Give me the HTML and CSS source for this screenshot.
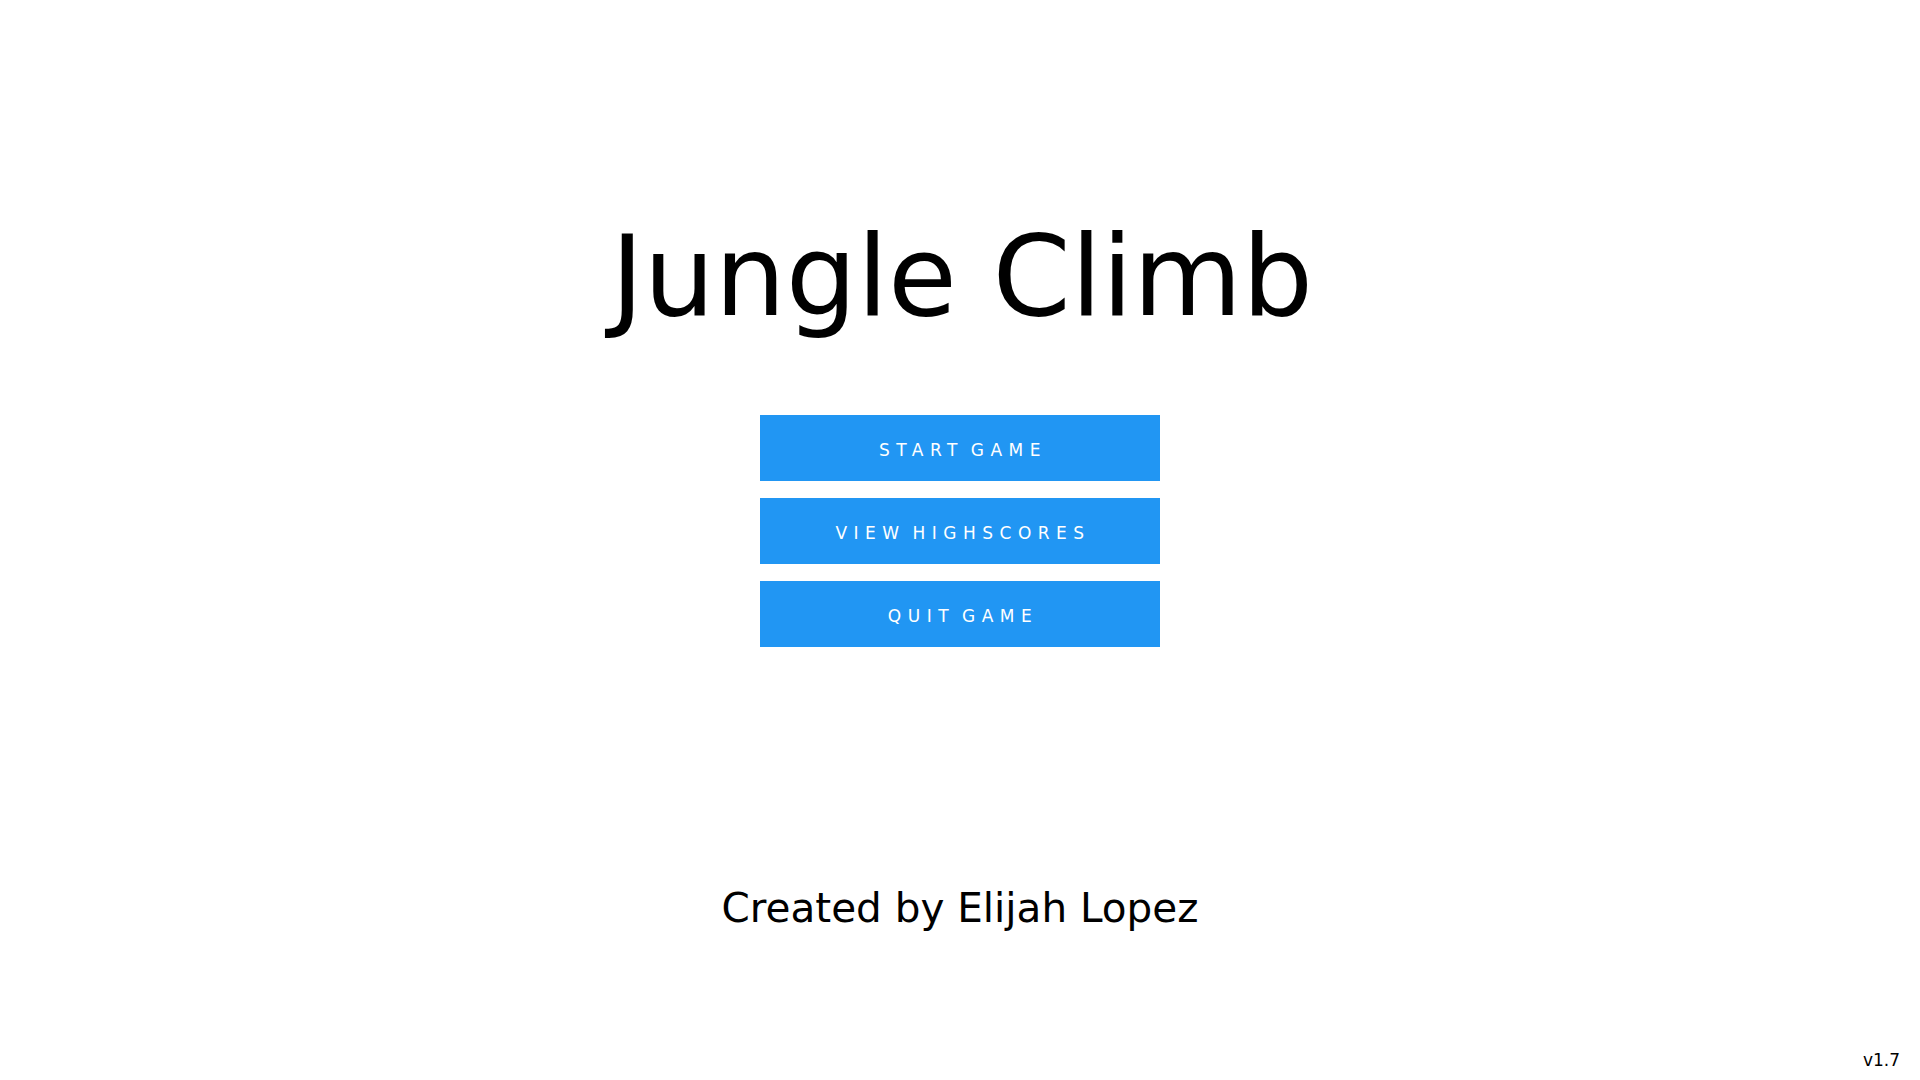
FILE: index.html
```html
<!DOCTYPE html>
<html lang="en">
<head>
<meta charset="utf-8">
<title>Jungle Climb</title>
<link rel="stylesheet" href="styles.css">
</head>
<body>
<main class="menu">
  <h1 class="title">Jungle Climb</h1>
  <div class="buttons">
    <button class="btn">START GAME</button>
    <button class="btn">VIEW HIGHSCORES</button>
    <button class="btn">QUIT GAME</button>
  </div>
  <p class="credit">Created by Elijah Lopez</p>
</main>
<div class="version">v1.7</div>
</body>
</html>
```
FILE: styles.css
```css
html, body {
  margin: 0;
  padding: 0;
  background: #ffffff;
  width: 1920px;
  height: 1080px;
  overflow: hidden;
  font-family: "DejaVu Sans", Verdana, sans-serif;
  color: #000;
}

.menu {
  display: flex;
  flex-direction: column;
  align-items: center;
  padding-top: 220px;
}

.title {
  margin: 0;
  padding-left: 4px;
  font-size: 112px;
  font-weight: normal;
  line-height: 1;
}

.buttons {
  display: flex;
  flex-direction: column;
  gap: 17px;
  margin-top: 83px;
}

.btn {
  width: 400px;
  height: 66px;
  border: none;
  background: #2196f3;
  color: #ffffff;
  font-family: "DejaVu Sans", Verdana, sans-serif;
  font-size: 17px;
  letter-spacing: 6.5px;
  word-spacing: -5px;
  padding: 3px 0 0 6px;
  margin: 0;
  display: flex;
  align-items: center;
  justify-content: center;
}

.credit {
  margin: 241px 0 0;
  font-size: 40.5px;
  line-height: 1;
}

.version {
  position: absolute;
  right: 20px;
  bottom: 11px;
  font-size: 17px;
  font-weight: normal;
  line-height: 1;
}
```
